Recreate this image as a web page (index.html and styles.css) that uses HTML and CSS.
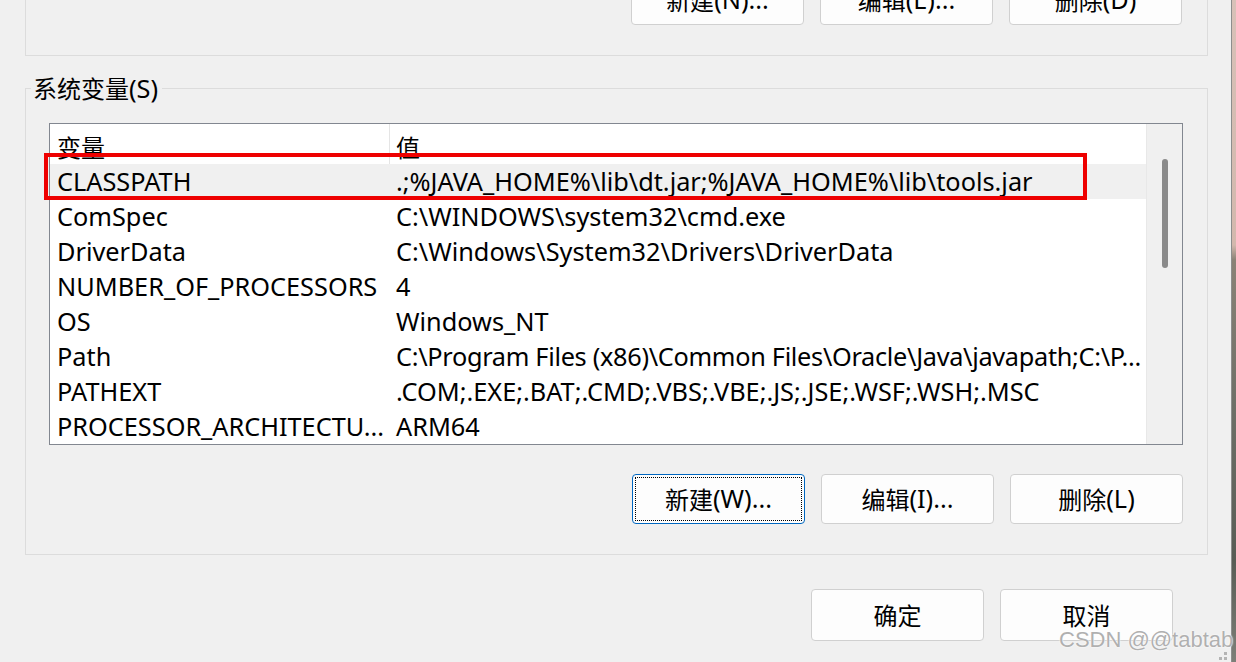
FILE: index.html
```html
<!DOCTYPE html>
<html lang="zh-CN">
<head>
<meta charset="utf-8">
<title>环境变量</title>
<link rel="stylesheet" href="styles.css">
</head>
<body>
<div class="screen">
  <div class="dialog">
    <div class="group top-group">
      <div class="btn-row">
        <button class="btn"><span class="cjk">新建</span>(N)...</button>
        <button class="btn"><span class="cjk">编辑</span>(E)...</button>
        <button class="btn"><span class="cjk">删除</span>(D)</button>
      </div>
    </div>

    <fieldset class="sys-group">
      <legend class="sys-legend"><span class="cjk">系统变量</span>(S)</legend>
      <div class="listbox">
        <div class="list-main">
          <div class="list-head">
            <div class="cell c1"><span class="cjk">变量</span></div>
            <div class="cell c2"><span class="cjk">值</span></div>
          </div>
          <div class="row selected"><div class="cell c1">CLASSPATH</div><div class="cell c2">.;%JAVA_HOME%\lib\dt.jar;%JAVA_HOME%\lib\tools.jar</div></div>
          <div class="row"><div class="cell c1">ComSpec</div><div class="cell c2">C:\WINDOWS\system32\cmd.exe</div></div>
          <div class="row"><div class="cell c1">DriverData</div><div class="cell c2">C:\Windows\System32\Drivers\DriverData</div></div>
          <div class="row"><div class="cell c1">NUMBER_OF_PROCESSORS</div><div class="cell c2">4</div></div>
          <div class="row"><div class="cell c1">OS</div><div class="cell c2">Windows_NT</div></div>
          <div class="row"><div class="cell c1">Path</div><div class="cell c2 tight">C:\Program Files (x86)\Common Files\Oracle\Java\javapath;C:\P...</div></div>
          <div class="row"><div class="cell c1">PATHEXT</div><div class="cell c2">.COM;.EXE;.BAT;.CMD;.VBS;.VBE;.JS;.JSE;.WSF;.WSH;.MSC</div></div>
          <div class="row"><div class="cell c1">PROCESSOR_ARCHITECTU...</div><div class="cell c2">ARM64</div></div>
        </div>
        <div class="scrollbar"><div class="thumb"></div></div>
        <div class="highlight"></div>
      </div>
      <div class="btn-row lower">
        <button class="btn focused"><span class="focus-ring"><span class="cjk">新建</span>(W)...</span></button>
        <button class="btn"><span class="cjk">编辑</span>(I)...</button>
        <button class="btn"><span class="cjk">删除</span>(L)</button>
      </div>
    </fieldset>

    <div class="dlg-buttons">
      <button class="btn tall"><span class="cjk">确定</span></button>
      <button class="btn tall"><span class="cjk">取消</span></button>
    </div>

    <svg class="grip" width="18" height="12" viewBox="0 0 18 12">
      <rect x="12" y="0" width="3" height="3" fill="#b4b4b4"/>
      <rect x="7" y="5" width="3" height="3" fill="#b4b4b4"/>
      <rect x="12" y="5" width="3" height="3" fill="#b4b4b4"/>
      <rect x="2" y="10" width="3" height="3" fill="#b4b4b4"/>
      <rect x="7" y="10" width="3" height="3" fill="#b4b4b4"/>
      <rect x="12" y="10" width="3" height="3" fill="#b4b4b4"/>
    </svg>
  </div>
  <div class="desktop"></div>
  <div class="watermark">CSDN @@tabtab</div>
</div>
</body>
</html>
```

FILE: styles.css
```css
html, body {
  margin: 0;
  padding: 0;
  height: 100%;
  overflow: hidden;
  background: #f0f0f0;
}

.screen {
  position: relative;
  display: flex;
  height: 662px;
  overflow: hidden;
  font-family: "Noto Sans", "Noto Sans CJK SC", sans-serif;
  font-size: 25.3px;
  color: #000;
}

.cjk {
  font-family: "Noto Sans CJK SC", "Noto Sans", sans-serif;
  font-size: 24px;
}

.dialog {
  position: relative;
  width: 1232px;
  flex: none;
  border-right: 1px solid #8d8d8d;
  padding-left: 25px;
  box-sizing: border-box;
  background: #f0f0f0;
}

.desktop {
  flex: 1;
  background: linear-gradient(to bottom, #d8c1b8 0, #d3b8ad 245px, #8a8276 260px, #6f7068 400px, #585c55 560px, #7d7f78 662px);
}

.group {
  width: 1183px;
  box-sizing: border-box;
  border: 1px solid #dcdcdc;
}

.top-group {
  margin-top: -40px;
  padding: 14px 25px 30px 0;
}

.btn-row {
  display: flex;
  justify-content: flex-end;
  gap: 16px;
}

.btn {
  width: 173px;
  height: 50px;
  box-sizing: border-box;
  padding: 0;
  border: 1px solid #d0d0d0;
  border-radius: 4px;
  background: #fdfdfd;
  font-family: "Noto Sans", "Noto Sans CJK SC", sans-serif;
  font-size: 25.3px;
  line-height: 1;
  color: #000;
  display: flex;
  align-items: center;
  justify-content: center;
}

.btn.tall {
  height: 52px;
}

.btn.focused {
  border-color: #0067c0;
  padding: 2px;
}

.focus-ring {
  flex: 1;
  align-self: stretch;
  display: flex;
  align-items: center;
  justify-content: center;
  border: 1px dotted #000;
}

.sys-group {
  width: 1183px;
  box-sizing: border-box;
  margin: 19px 0 0 0;
  padding: 22px 24px 30px 23px;
  border: 1px solid #dcdcdc;
  min-width: 0;
}

.sys-legend {
  padding: 0 4px 0 2px;
  margin-left: -18px;
  line-height: 26px;
  font-size: 25.3px;
}

.listbox {
  position: relative;
  display: flex;
  height: 322px;
  box-sizing: border-box;
  border: 1px solid #828790;
  background: #fff;
}

.list-main {
  width: 1097px;
  flex: none;
  border-right: 1px solid #e8e8e8;
  box-sizing: border-box;
}

.list-head {
  display: flex;
  height: 40px;
}

.list-head .cell {
  height: 40px;
  line-height: 46px;
}

.list-head .c1 {
  border-right: 1px solid #e5e5e5;
}

.row {
  display: flex;
  height: 35px;
  align-items: center;
  line-height: 35px;
}

.row.selected {
  background: #f0f0f0;
}

.cell {
  white-space: nowrap;
  overflow: hidden;
  box-sizing: border-box;
}

.c1 {
  width: 340px;
  padding-left: 7px;
  flex: none;
}

.c2 {
  flex: 1;
  padding-left: 6px;
}

.c2.tight {
  letter-spacing: -0.3px;
}

.scrollbar {
  flex: 1;
  background: #f0f0f0;
  display: flex;
  justify-content: center;
  padding-top: 35px;
  box-sizing: border-box;
}

.thumb {
  width: 6px;
  height: 109px;
  border-radius: 3px;
  background: #8a8a8a;
}

.highlight {
  position: absolute;
  left: -6px;
  top: 29px;
  width: 1043px;
  height: 47px;
  box-sizing: border-box;
  border: 4px solid #ee0000;
  pointer-events: none;
}

.lower {
  margin-top: 29px;
}

.dlg-buttons {
  display: flex;
  justify-content: flex-end;
  gap: 16px;
  margin-top: 34px;
  padding-right: 35px;
  width: 1183px;
  box-sizing: border-box;
}

.grip {
  position: absolute;
  right: 1px;
  bottom: -2px;
}

.watermark {
  position: absolute;
  left: 1059px;
  top: 627px;
  font-family: "Liberation Sans", Arial, sans-serif;
  font-size: 22px;
  color: #b0b0b0;
  white-space: nowrap;
  text-shadow: 0 0 2px #fff, 0 0 1px #fff;
  pointer-events: none;
}
```
